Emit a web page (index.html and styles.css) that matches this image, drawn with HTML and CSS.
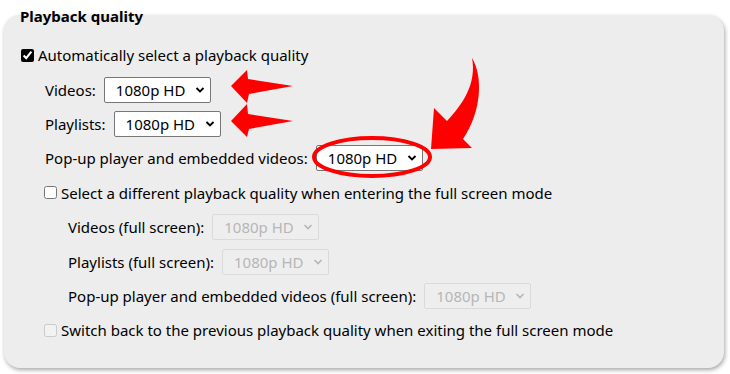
FILE: index.html
```html
<!DOCTYPE html>
<html lang="en">
<head>
    <meta charset="UTF-8">
    <title>Playback quality</title>
    <link rel="stylesheet" href="styles.css">
</head>
<body>

<h2 class="section-title">Playback quality</h2>

<div class="panel">
    <label class="row">
        <input type="checkbox" checked>
        <span>Automatically select a playback quality</span>
    </label>

    <div class="row indent">
        <span class="label">Videos:</span>
        <select class="quality"><option>1080p HD</option></select>
    </div>
    <div class="row indent">
        <span class="label">Playlists:</span>
        <select class="quality"><option>1080p HD</option></select>
    </div>
    <div class="row indent">
        <span class="label">Pop-up player and embedded videos:</span>
        <select class="quality"><option>1080p HD</option></select>
    </div>

    <label class="row indent-check">
        <input type="checkbox">
        <span>Select a different playback quality when entering the full screen mode</span>
    </label>

    <div class="row indent-2">
        <span class="label">Videos (full screen):</span>
        <select class="quality" disabled><option>1080p HD</option></select>
    </div>
    <div class="row indent-2">
        <span class="label">Playlists (full screen):</span>
        <select class="quality" disabled><option>1080p HD</option></select>
    </div>
    <div class="row indent-2">
        <span class="label">Pop-up player and embedded videos (full screen):</span>
        <select class="quality" disabled><option>1080p HD</option></select>
    </div>

    <label class="row indent-check">
        <input type="checkbox" disabled>
        <span>Switch back to the previous playback quality when exiting the full screen mode</span>
    </label>
</div>

<!-- red annotations drawn over the screenshot -->
<svg class="marks" width="730" height="374" viewBox="0 0 730 374">
    <polygon points="231,86 247,70 248,79 293,86 249,94 247,103" fill="#ff0000"/>
    <polygon points="231,121 247,104 248,114 293,121 249,129 247,137" fill="#ff0000"/>
    <path d="M472,58 C483,76 482,111 463,139 L472,148 L431,149 L434,108 L447,121 C462,105 477,84 472,58 Z" fill="#ff0000"/>
    <ellipse cx="372" cy="157" rx="58" ry="19" fill="none" stroke="#ff0000" stroke-width="4"/>
</svg>

</body>
</html>
```

FILE: styles.css
```css
/* 基本样式 */
body {
    margin: 0;
    padding: 7px 6px 8px 4px;
    font-family: "Noto Sans", "Liberation Sans", sans-serif;
    font-size: 15px;
    color: #000;
    background-color: #fff;
}
.section-title {
    position: relative;
    z-index: 1;
    margin: 0 0 -10px 16px;
    font-size: 15px;
    line-height: 18px;
    font-weight: bold;
}
.panel {
    display: flex;
    flex-direction: column;
    padding: 23px 16px 20px 16px;
    background-color: #ededed;
    border-radius: 16px;
    box-shadow: 1px 2px 4px rgba(0, 0, 0, 0.35);
}
.row {
    display: flex;
    align-items: center;
    gap: 8px;
    height: 34.4px;
    white-space: nowrap;
}
.indent {
    padding-left: 25px;
}
.indent-check {
    padding-left: 23px;
}
.indent-2 {
    padding-left: 48px;
}

/* 复选框 */
input[type="checkbox"] {
    width: 13px;
    height: 13px;
    margin: 0 4px 0 1px;
    accent-color: #000;
}
label.row {
    gap: 0;
}

/* 下拉框 */
.quality {
    appearance: none;
    width: 107px;
    height: 26px;
    padding: 0 0 0 11px;
    font-family: inherit;
    font-size: 15px;
    color: #000;
    background-color: #fff;
    background-image: url("data:image/svg+xml;utf8,<svg xmlns='http://www.w3.org/2000/svg' width='10' height='8' viewBox='0 0 10 8'><path d='M1.5 2 L5 5.5 L8.5 2' fill='none' stroke='%23000' stroke-width='1.9'/></svg>");
    background-repeat: no-repeat;
    background-position: right 5px center;
    border: 1px solid #767676;
    border-radius: 2px;
}
.quality:disabled {
    color: #a0a0a0;
    background-color: #efefef;
    background-image: url("data:image/svg+xml;utf8,<svg xmlns='http://www.w3.org/2000/svg' width='10' height='8' viewBox='0 0 10 8'><path d='M1.5 2 L5 5.5 L8.5 2' fill='none' stroke='%23a0a0a0' stroke-width='1.6'/></svg>");
    border-color: #d3d3d3;
}

/* 红色标注 */
.marks {
    position: absolute;
    top: 0;
    left: 0;
    pointer-events: none;
}
```
